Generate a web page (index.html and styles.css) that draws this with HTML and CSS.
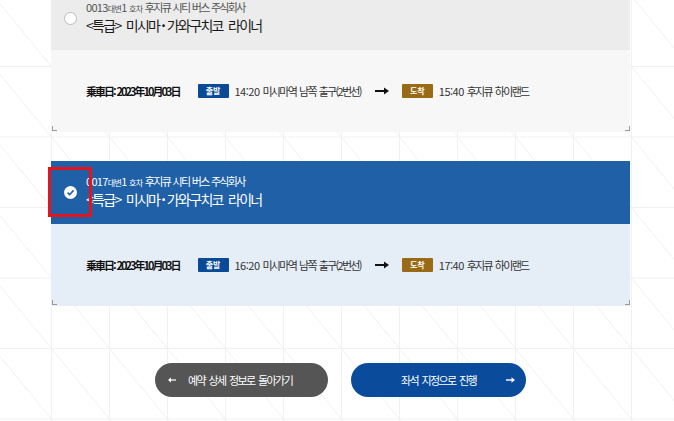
FILE: index.html
```html
<!DOCTYPE html>
<html lang="ko">
<head>
  <meta charset="UTF-8" />
  <meta name="viewport" content="width=device-width, initial-scale=1.0"/>
  <title>便選択</title>
  <link rel="stylesheet" href="styles.css">
</head>
<body>
  <div class="page">

    <div class="card">
      <div class="card-head">
        <span class="radio"></span>
        <div class="head-text">
          <div class="bus-no"><span class="num">0013</span><span class="sub">대변</span><span class="num">1</span> <span class="sub">호차</span> 후지큐 시티 버스 주식회사</div>
          <div class="route">&lt;특급&gt; 미시마<span class="dot">·</span>가와구치코 라이너</div>
        </div>
      </div>
      <div class="card-body">
        <span class="date">乗車日<span class="colon">:</span>2023年10月03日</span>
        <span class="badge dep">출발</span>
        <span class="stop"><span class="time">14:20</span> 미시마역 남쪽 출구(2번선)</span>
        <svg class="arrow" width="14" height="8" viewBox="0 0 14 8"><path d="M0 4H10" stroke="#111" stroke-width="2"/><path d="M9 0.5L14 4L9 7.5Z" fill="#111"/></svg>
        <span class="badge arr">도착</span>
        <span class="stop"><span class="time">15:40</span> 후지큐 하이랜드</span>
      </div>
    </div>

    <div class="card selected">
      <div class="card-head">
        <svg class="check" width="13" height="13" viewBox="0 0 13 13"><circle cx="6.5" cy="6.5" r="6.5" fill="#fff"/><path d="M3.6 6.7L5.7 8.7L9.5 4.4" fill="none" stroke="#2060a6" stroke-width="1.6"/></svg>
        <div class="head-text">
          <div class="bus-no"><span class="num">0017</span><span class="sub">대변</span><span class="num">1</span> <span class="sub">호차</span> 후지큐 시티 버스 주식회사</div>
          <div class="route">&lt;특급&gt; 미시마<span class="dot">·</span>가와구치코 라이너</div>
        </div>
      </div>
      <div class="card-body">
        <span class="date">乗車日<span class="colon">:</span>2023年10月03日</span>
        <span class="badge dep">출발</span>
        <span class="stop"><span class="time">16:20</span> 미시마역 남쪽 출구(2번선)</span>
        <svg class="arrow" width="14" height="8" viewBox="0 0 14 8"><path d="M0 4H10" stroke="#111" stroke-width="2"/><path d="M9 0.5L14 4L9 7.5Z" fill="#111"/></svg>
        <span class="badge arr">도착</span>
        <span class="stop"><span class="time">17:40</span> 후지큐 하이랜드</span>
      </div>
      <div class="mark"></div>
    </div>

    <div class="actions">
      <button class="btn back">
        <svg width="8" height="6" viewBox="0 0 8 6"><path d="M1 3H8" stroke="#fff" stroke-width="1.2"/><path d="M0 3L3 0.5V5.5Z" fill="#fff"/></svg>
        <span>예약 상세 정보로 돌아가기</span>
      </button>
      <button class="btn next">
        <span>좌석 지정으로 진행</span>
        <svg class="next-arrow" width="9" height="6" viewBox="0 0 9 6"><path d="M0 3H7" stroke="#fff" stroke-width="1.4"/><path d="M9 3L5.5 0.3V5.7Z" fill="#fff"/></svg>
      </button>
    </div>

  </div>
</body>
</html>
```

FILE: styles.css
```css
body {
  margin: 0;
  font-family: "Noto Sans CJK KR", "Noto Sans CJK JP", "Noto Sans", sans-serif;
  color: #222;
  background-color: #fff;
  background-image:
    linear-gradient(to right, #f1f1f1 1px, transparent 1px),
    linear-gradient(to bottom, #f1f1f1 1px, transparent 1px),
    linear-gradient(to top right, transparent calc(50% - 0.7px), #eeeeee 50%, transparent calc(50% + 0.7px));
  background-size: 58px 70.5px;
  background-position: 51px 66px;
}
.page {
  width: 579px;
  margin: -13px 0 0 51px;
}
.card {
  position: relative;
}
.card + .card {
  margin-top: 29px;
}
.card-head {
  height: 63px;
  display: flex;
  align-items: center;
  gap: 9px;
  padding-left: 13px;
  background: #ececec;
}
.radio {
  width: 11px;
  height: 11px;
  border: 1px solid #bbb;
  border-radius: 50%;
  background: #fff;
}
.head-text {
  margin-top: -2px;
}
.bus-no {
  font-size: 11px;
  line-height: 14px;
  color: #555;
  letter-spacing: -1.7px;
  word-spacing: 1px;
}
.bus-no .num {
  letter-spacing: -0.7px;
}
.bus-no .sub {
  font-size: 8px;
  letter-spacing: -0.6px;
}
.route {
  font-size: 14px;
  line-height: 19px;
  color: #1a1a1a;
  letter-spacing: -1.7px;
  word-spacing: 3px;
}
.route .dot {
  letter-spacing: 0;
  margin: 0 1px 0 2px;
  font-weight: bold;
}
.card-body {
  position: relative;
  height: 82px;
  display: flex;
  align-items: center;
  padding-left: 35px;
  background: #f7f7f7;
  font-size: 11px;
  color: #333;
}
.card-body::before,
.card-body::after {
  content: "";
  position: absolute;
  bottom: 1px;
  width: 4px;
  height: 4px;
  border-bottom: 1px solid #9a9a9a;
}
.card-body::before {
  left: 1px;
  border-left: 1px solid #9a9a9a;
}
.card-body::after {
  right: 0;
  border-right: 1px solid #9a9a9a;
}
.date {
  font-weight: bold;
  color: #111;
  letter-spacing: -2px;
  margin-right: 18px;
}
.date .colon {
  letter-spacing: 0;
}
.badge {
  width: 31px;
  height: 14px;
  line-height: 14px;
  text-align: center;
  font-size: 8px;
  font-weight: bold;
  color: #fff;
  border-radius: 1px;
  margin-right: 6px;
}
.dep {
  background: #0b4a97;
}
.arr {
  background: #9a6b16;
  margin-left: 13px;
}
.stop {
  letter-spacing: -1.7px;
  word-spacing: 1.5px;
}
.stop .time {
  letter-spacing: -0.5px;
}
.arrow {
  margin-left: 14px;
}
.selected .card-head {
  background: #2060a6;
}
.selected .bus-no,
.selected .route {
  color: #fff;
}
.selected .card-body {
  background: #e5edf6;
}
.mark {
  position: absolute;
  left: -3px;
  top: 6px;
  width: 44px;
  height: 50px;
  box-sizing: border-box;
  border: 3px solid #e5141c;
}
.actions {
  display: flex;
  justify-content: center;
  gap: 23px;
  margin-top: 57px;
}
.btn {
  height: 34px;
  border: none;
  border-radius: 17px;
  color: #fff;
  font-family: inherit;
  font-size: 11px;
  letter-spacing: -1.6px;
  word-spacing: 2px;
  display: flex;
  align-items: center;
  cursor: pointer;
}
.back {
  width: 173px;
  padding-left: 13px;
  gap: 12px;
  background: #555;
}
.next {
  position: relative;
  width: 175px;
  justify-content: center;
  background: #0a4b9b;
}
.next-arrow {
  position: absolute;
  right: 11px;
  top: 14px;
}
```
